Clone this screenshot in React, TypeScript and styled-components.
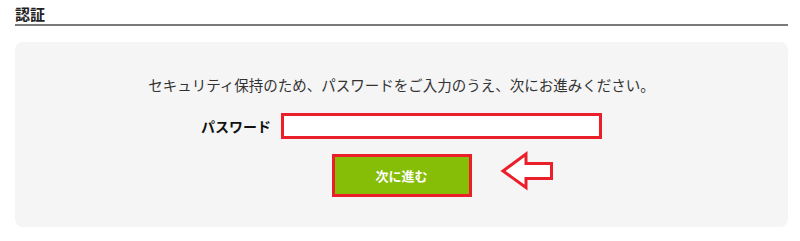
import React from 'react';
import styled, {createGlobalStyle} from "styled-components";

const GlobalStyle = createGlobalStyle`
    body {
        margin: 0;
        background: #fff;
        font-family: "Noto Sans CJK JP", "Noto Sans", sans-serif;
        color: #333;
    }
`

const ArrowIcon = () => (
    <svg width="55" height="40" viewBox="0 0 55 40">
        <polygon
            points="3,20 26,3 26,12.5 51.5,12.5 51.5,27.5 26,27.5 26,36.5"
            fill="#fff"
            stroke="#ea1f2a"
            strokeWidth="3"
            strokeLinejoin="miter"
        />
    </svg>
);

export default function App() {
    return (
        <>
            <GlobalStyle/>
            <Page>
                <Heading>認証</Heading>
                <Panel>
                    <Lead>セキュリティ保持のため、パスワードをご入力のうえ、次にお進みください。</Lead>
                    <FieldRow>
                        <Label>パスワード</Label>
                        <Input type="password"/>
                    </FieldRow>
                    <ButtonRow>
                        <NextButton type="button">次に進む</NextButton>
                        <Pointer>
                            <ArrowIcon/>
                        </Pointer>
                    </ButtonRow>
                </Panel>
            </Page>
        </>
    );
}

const Page = styled.div`
    padding: 0 12px 14px 15px;
`
const Heading = styled.h2`
    margin: 0;
    padding-top: 5px;
    height: 19px;
    font-size: 15px;
    line-height: 17px;
    font-weight: 700;
    color: #222;
    border-bottom: 2px solid #7a7a7a;
`
const Panel = styled.div`
    margin-top: 16px;
    background: #f5f5f5;
    border-radius: 8px;
    padding: 33px 0 30px;
    display: flex;
    flex-direction: column;
    align-items: center;
`
const Lead = styled.p`
    margin: 0;
    font-size: 14.5px;
    line-height: 20px;
    color: #333;
    white-space: nowrap;
`
const FieldRow = styled.div`
    margin-top: 18px;
    display: flex;
    align-items: center;
    gap: 10px;
`
const Label = styled.label`
    font-size: 14px;
    font-weight: 700;
    color: #111;
    line-height: 20px;
`
const Input = styled.input`
    box-sizing: border-box;
    width: 321px;
    height: 26px;
    border: 3px solid #ea1f2a;
    background: #fff;
    outline: none;
    padding: 0 6px;
`
const ButtonRow = styled.div`
    margin-top: 15px;
    position: relative;
`
const NextButton = styled.button`
    box-sizing: border-box;
    width: 140px;
    height: 43px;
    border: 3px solid #ea1f2a;
    background: #86bd06;
    color: #fff;
    font-family: inherit;
    font-size: 13px;
    font-weight: 700;
    cursor: pointer;
    display: block;
`
const Pointer = styled.div`
    position: absolute;
    left: 168px;
    top: -3px;
    line-height: 0;
`
